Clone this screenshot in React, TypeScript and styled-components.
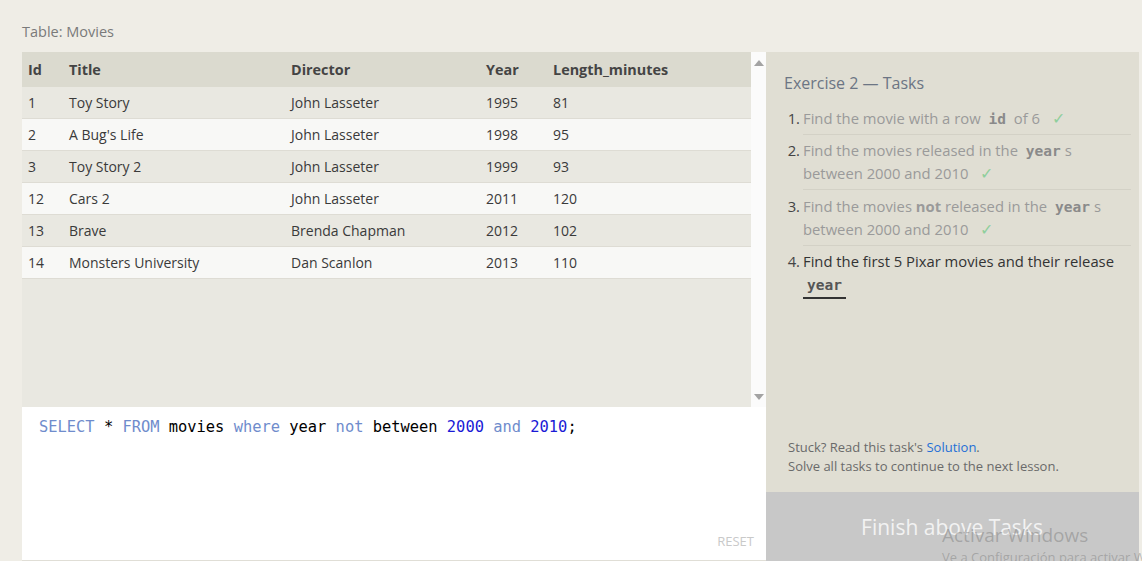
import React from "react";
import styled, { createGlobalStyle } from "styled-components";

const Global = createGlobalStyle`
  html, body { margin: 0; padding: 0; }
  body {
    background: #efede6;
    font-family: "Open Sans", "Noto Sans", sans-serif;
    color: #333;
    width: 1142px;
    height: 561px;
    overflow: hidden;
  }
`;

const Page = styled.div`
  position: relative;
  height: 561px;
  padding: 22px 3px 0 22px;
  box-sizing: border-box;
  display: flex;
  flex-direction: column;
`;

const Caption = styled.div`
  font-size: 14.5px;
  line-height: 20px;
  color: #7a7a7a;
  margin-bottom: 10px;
`;

const Main = styled.div`
  flex: 1;
  display: grid;
  grid-template-columns: 744px 373px;
  min-height: 0;
`;

const LeftPanel = styled.div`
  display: flex;
  flex-direction: column;
  border-bottom: 1px solid #e0ded6;
`;

const TableArea = styled.div`
  height: 355px;
  display: flex;
  background: #e9e8e1;
`;

const Table = styled.div`
  flex: 1;
  display: flex;
  flex-direction: column;
`;

const Row = styled.div<{ $variant: "head" | "odd" | "even" }>`
  display: grid;
  grid-template-columns: 41px 222px 195px 67px 1fr;
  height: ${(p) => (p.$variant === "head" ? "35px" : "32px")};
  box-sizing: border-box;
  align-items: center;
  background: ${(p) =>
    p.$variant === "head" ? "#dbdacf" : p.$variant === "odd" ? "#e9e8e1" : "#f8f8f6"};
  border-bottom: ${(p) => (p.$variant === "head" ? "none" : "1px solid #dedcd4")};
  font-size: ${(p) => (p.$variant === "head" ? "14.4px" : "14px")};
  font-weight: ${(p) => (p.$variant === "head" ? 700 : 400)};
  color: ${(p) => (p.$variant === "head" ? "#444" : "#3a3a3a")};
`;

const Cell = styled.div`
  padding-left: 6px;
  white-space: nowrap;
`;

const Scrollbar = styled.div`
  width: 15px;
  background: #fbfbfb;
  display: flex;
  flex-direction: column;
  justify-content: space-between;
  align-items: center;
  padding: 8px 0 7px;
  box-sizing: border-box;
`;

const Arrow = styled.div<{ $down?: boolean }>`
  width: 0;
  height: 0;
  border-left: 5px solid transparent;
  border-right: 5px solid transparent;
  ${(p) =>
    p.$down
      ? "border-top: 6px solid #a3a3a3;"
      : "border-bottom: 6px solid #a3a3a3;"}
`;

const Editor = styled.div`
  flex: 1;
  background: #fff;
  display: flex;
  flex-direction: column;
  padding: 10px 12px 11px 17px;
  box-sizing: border-box;
`;

const Code = styled.div`
  font-family: "DejaVu Sans Mono", "Liberation Mono", monospace;
  font-size: 15.4px;
  line-height: 20px;
  color: #000;
  white-space: pre;
`;

const Tok = styled.span<{ $kind: "kw" | "num" | "id" }>`
  color: ${(p) => (p.$kind === "kw" ? "#6f8ccc" : p.$kind === "num" ? "#1a1ad6" : "#000")};
`;

const Reset = styled.div`
  margin-top: auto;
  align-self: flex-end;
  font-size: 13px;
  color: #c9c9c9;
  line-height: 16px;
`;

const RightPanel = styled.div`
  background: #e0ded3;
  display: flex;
  flex-direction: column;
`;

const Tasks = styled.div`
  flex: 1;
  padding: 19px 8px 0 18px;
`;

const Heading = styled.div`
  font-size: 16px;
  line-height: 24px;
  color: #6c7584;
  margin-bottom: 7px;
`;

const List = styled.ol`
  list-style: none;
  margin: 0;
  padding: 0;
`;

const Item = styled.li`
  display: flex;
`;

const Num = styled.span`
  width: 16px;
  text-align: right;
  font-size: 14.8px;
  line-height: 23px;
  padding: 4.5px 3px 0 0;
  color: #444;
`;

const Body = styled.div<{ $done?: boolean; $last?: boolean }>`
  flex: 1;
  font-size: 14.8px;
  line-height: 23px;
  padding: 4.5px 0 4px;
  color: ${(p) => (p.$done ? "#9a9a9a" : "#333")};
  border-bottom: ${(p) => (p.$last ? "none" : "1px solid #d3d1c6")};
`;

const InlineCode = styled.code<{ $active?: boolean }>`
  font-family: "DejaVu Sans Mono", "Liberation Mono", monospace;
  font-weight: 700;
  font-size: 14.5px;
  line-height: 1;
  padding: 0 4px;
  color: ${(p) => (p.$active ? "#555" : "#8a8a8a")};
  ${(p) => (p.$active ? "border-bottom: 2px solid #333; padding-bottom: 4px;" : "")}
`;

const Check = styled.span`
  color: #8fcf9c;
  font-size: 16px;
  line-height: 1;
  margin-left: 12px;
`;

const Footer = styled.div`
  padding: 0 10px 16px 22px;
  font-size: 13px;
  line-height: 19px;
  color: #6a6a6a;
`;

const Link = styled.a`
  color: #1f6fd6;
  text-decoration: none;
`;

const FinishButton = styled.div`
  height: 69px;
  background: #c8c8c8;
  color: #f2f2f2;
  font-size: 21px;
  display: flex;
  align-items: center;
  justify-content: center;
  padding-right: 1px;
`;

const Watermark = styled.div`
  position: absolute;
  left: 942px;
  top: 521px;
  color: rgba(120, 120, 120, 0.45);
  white-space: nowrap;
  pointer-events: none;
`;

const WatermarkTitle = styled.div`
  font-size: 19px;
  line-height: 28px;
`;

const WatermarkSub = styled.div`
  font-size: 13px;
  line-height: 17px;
`;

const movies = [
  ["1", "Toy Story", "John Lasseter", "1995", "81"],
  ["2", "A Bug's Life", "John Lasseter", "1998", "95"],
  ["3", "Toy Story 2", "John Lasseter", "1999", "93"],
  ["12", "Cars 2", "John Lasseter", "2011", "120"],
  ["13", "Brave", "Brenda Chapman", "2012", "102"],
  ["14", "Monsters University", "Dan Scanlon", "2013", "110"],
];

const headers = ["Id", "Title", "Director", "Year", "Length_minutes"];

export default function App() {
  return (
    <>
      <Global />
      <Page>
        <Caption>Table: Movies</Caption>
        <Main>
          <LeftPanel>
            <TableArea>
              <Table>
                <Row $variant="head">
                  {headers.map((h) => (
                    <Cell key={h}>{h}</Cell>
                  ))}
                </Row>
                {movies.map((m, i) => (
                  <Row key={m[0]} $variant={i % 2 === 0 ? "odd" : "even"}>
                    {m.map((c, j) => (
                      <Cell key={j}>{c}</Cell>
                    ))}
                  </Row>
                ))}
              </Table>
              <Scrollbar>
                <Arrow />
                <Arrow $down />
              </Scrollbar>
            </TableArea>
            <Editor>
              <Code>
                <Tok $kind="kw">SELECT</Tok> * <Tok $kind="kw">FROM</Tok> movies{" "}
                <Tok $kind="kw">where</Tok> year <Tok $kind="kw">not</Tok> between{" "}
                <Tok $kind="num">2000</Tok> <Tok $kind="kw">and</Tok>{" "}
                <Tok $kind="num">2010</Tok>;
              </Code>
              <Reset>RESET</Reset>
            </Editor>
          </LeftPanel>
          <RightPanel>
            <Tasks>
              <Heading>Exercise 2 — Tasks</Heading>
              <List>
                <Item>
                  <Num>1.</Num>
                  <Body $done>
                    Find the movie with a row <InlineCode>id</InlineCode> of 6
                    <Check>✓</Check>
                  </Body>
                </Item>
                <Item>
                  <Num>2.</Num>
                  <Body $done>
                    Find the movies released in the <InlineCode>year</InlineCode>s
                    <br />
                    between 2000 and 2010<Check>✓</Check>
                  </Body>
                </Item>
                <Item>
                  <Num>3.</Num>
                  <Body $done>
                    Find the movies <b>not</b> released in the{" "}
                    <InlineCode>year</InlineCode>s
                    <br />
                    between 2000 and 2010<Check>✓</Check>
                  </Body>
                </Item>
                <Item>
                  <Num>4.</Num>
                  <Body $last>
                    Find the first 5 Pixar movies and their release
                    <br />
                    <InlineCode $active>year</InlineCode>
                  </Body>
                </Item>
              </List>
            </Tasks>
            <Footer>
              Stuck? Read this task's <Link href="#">Solution</Link>.
              <br />
              Solve all tasks to continue to the next lesson.
            </Footer>
            <FinishButton>Finish above Tasks</FinishButton>
          </RightPanel>
        </Main>
        <Watermark>
          <WatermarkTitle>Activar Windows</WatermarkTitle>
          <WatermarkSub>Ve a Configuración para activar Windows.</WatermarkSub>
        </Watermark>
      </Page>
    </>
  );
}
